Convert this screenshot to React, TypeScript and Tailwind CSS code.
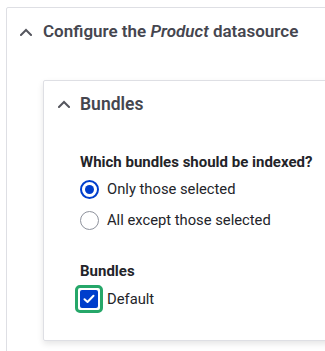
import React from "react";

const Chevron = () => (
  <svg width="12" height="8" viewBox="0 0 12 8" fill="none">
    <path d="M1 7 L6 2 L11 7" stroke="#55565e" strokeWidth="2" strokeLinecap="square" />
  </svg>
);

export default function App() {
  const font = { fontFamily: 'Roboto, "Noto Sans", sans-serif' };
  return (
    <div className="w-[325px] h-[351px] overflow-hidden bg-white" style={font}>
      <div className="ml-[6px] mt-[7px] w-[360px] h-[400px] border border-[#dedfe4] rounded-[2px] bg-white">
        <div className="h-[48px] flex items-center pl-[13px] gap-[11px] text-[#45464f] text-[17px] font-semibold">
          <Chevron />
          <span>
            Configure the <em className="font-semibold">Product</em> datasource
          </span>
        </div>
        <div className="ml-[36px] mt-[24px] border border-[#dedfe4] rounded-[2px] shadow-[0_3px_6px_rgba(0,0,0,0.1)] pb-[27px]">
          <div className="h-[46px] flex items-center pl-[14px] gap-[10px] text-[#45464f] text-[17.5px] font-semibold">
            <Chevron />
            <span>Bundles</span>
          </div>
          <div className="pl-[36px] pt-[25px] text-[#232429]">
            <div className="h-[20px] flex items-center text-[15px] font-bold">
              Which bundles should be indexed?
            </div>
            <div className="mt-[2px] h-[31px] flex items-center gap-[8px] text-[14.75px]">
              <div className="w-[19px] h-[19px] rounded-full border-2 border-[#003ecc] flex items-center justify-center">
                <div className="w-[9px] h-[9px] rounded-full bg-[#003ecc]" />
              </div>
              <span>Only those selected</span>
            </div>
            <div className="h-[31px] flex items-center gap-[8px] text-[14.75px]">
              <div className="w-[19px] h-[19px] rounded-full border border-[#8e929c]" />
              <span>All except those selected</span>
            </div>
            <div className="mt-[25px] h-[20px] flex items-center text-[15px] font-bold">
              Bundles
            </div>
            <div className="mt-[4px] h-[28px] flex items-center gap-[4px] text-[14.75px] -ml-[5px]">
              <div className="w-[28px] h-[28px] rounded-[5px] border-[3px] border-[#26a769] flex items-center justify-center">
                <div className="w-[18px] h-[18px] rounded-[2px] bg-[#003ecc] flex items-center justify-center">
                  <svg width="12" height="10" viewBox="0 0 12 10" fill="none">
                    <path d="M1.5 5.2 L4.5 8 L10.5 1.8" stroke="white" strokeWidth="2" strokeLinecap="round" strokeLinejoin="round" />
                  </svg>
                </div>
              </div>
              <span>Default</span>
            </div>
          </div>
        </div>
      </div>
    </div>
  );
}
